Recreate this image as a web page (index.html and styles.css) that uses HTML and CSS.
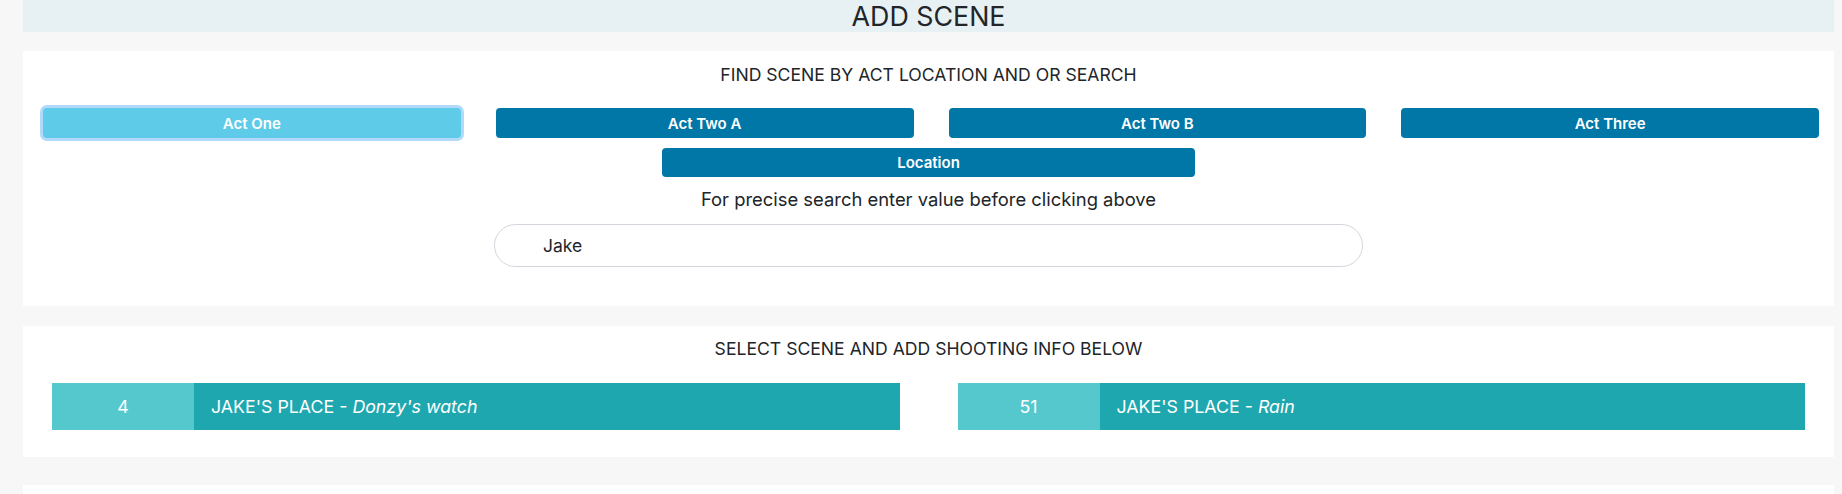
FILE: index.html
```html
<!DOCTYPE html>
<html lang="en">
<head>
<meta charset="utf-8">
<title>Add Scene</title>
<link rel="stylesheet" href="styles.css">
</head>
<body>
<div class="page">
  <div class="header"><h1 class="header-title">ADD SCENE</h1></div>

  <section class="card card-find">
    <h2 class="card-title">FIND SCENE BY ACT LOCATION AND OR SEARCH</h2>
    <div class="act-grid">
      <div class="act-cell"><button class="btn btn-active">Act One</button></div>
      <div class="act-cell"><button class="btn">Act Two A</button></div>
      <div class="act-cell"><button class="btn">Act Two B</button></div>
      <div class="act-cell"><button class="btn">Act Three</button></div>
    </div>
    <div class="location-row"><button class="btn btn-location">Location</button></div>
    <p class="hint">For precise search enter value before clicking above</p>
    <div class="search-row"><input class="search" type="text" value="Jake"></div>
  </section>

  <section class="card card-select">
    <h2 class="card-title">SELECT SCENE AND ADD SHOOTING INFO BELOW</h2>
    <div class="scene-grid">
      <div class="scene-col">
        <div class="scene">
          <div class="scene-num">4</div>
          <div class="scene-name">JAKE'S PLACE - <em>Donzy's watch</em></div>
        </div>
      </div>
      <div class="scene-col">
        <div class="scene">
          <div class="scene-num">51</div>
          <div class="scene-name">JAKE'S PLACE - <em>Rain</em></div>
        </div>
      </div>
    </div>
  </section>

  <section class="card card-next"></section>
</div>
</body>
</html>
```

FILE: styles.css
```css
html, body {
  margin: 0;
  padding: 0;
}
body {
  background: #f7f7f7;
  font-family: Inter, "Liberation Sans", Arial, sans-serif;
  color: #212529;
  overflow: hidden;
}
.page {
  padding: 0 8px 0 23px;
}
.header {
  height: 32px;
  background: #e7f0f2;
  display: flex;
  justify-content: center;
  align-items: center;
}
.header-title {
  margin: 0;
  font-weight: 400;
  font-size: 26.8px;
  line-height: 30px;
  color: #212529;
}
.card {
  background: #ffffff;
}
.card-find {
  margin-top: 19px;
  padding: 12px 0 38px;
  height: 205px;
}
.card-title {
  margin: 0;
  text-align: center;
  font-weight: 400;
  font-size: 17.6px;
  line-height: 24px;
  color: #212529;
}
.act-grid {
  display: grid;
  grid-template-columns: repeat(4, 1fr);
  margin-top: 21px;
}
.act-cell {
  padding: 0 15px 0 20px;
}
.btn {
  display: block;
  width: 100%;
  height: 30px;
  border: 0;
  border-radius: 4px;
  background: #0077a7;
  color: #ffffff;
  font-family: inherit;
  font-size: 15px;
  font-weight: 600;
  padding: 0;
}
.btn-active {
  background: #5ecbe8;
  box-shadow: 0 0 0 3px #b2d8fc;
}
.location-row {
  display: flex;
  justify-content: center;
  margin-top: 10px;
}
.btn-location {
  width: 533px;
  height: 29px;
}
.hint {
  margin: 9px 0 0;
  text-align: center;
  font-size: 18.4px;
  line-height: 27px;
  color: #212529;
}
.search-row {
  display: flex;
  justify-content: center;
  margin-top: 11px;
}
.search {
  box-sizing: border-box;
  width: 869px;
  height: 43px;
  border: 1px solid #d2d6dc;
  border-radius: 22px;
  padding: 0 0 0 48px;
  font-family: inherit;
  font-size: 17.5px;
  color: #212529;
  background: #ffffff;
  outline: none;
}
.card-select {
  margin-top: 20px;
  padding: 11px 0 28px;
  height: 92px;
}
.scene-grid {
  display: grid;
  grid-template-columns: 1fr 1fr;
  margin-top: 22px;
}
.scene-col {
  padding: 0 29px;
}
.scene {
  display: flex;
  height: 47px;
  color: #ffffff;
  font-size: 17.8px;
}
.scene-num {
  width: 142px;
  flex: none;
  background: #55c8ce;
  display: flex;
  align-items: center;
  justify-content: center;
}
.scene-name {
  flex: 1;
  background: #1fa7b0;
  display: flex;
  align-items: center;
  padding-left: 17px;
  white-space: pre;
}
.scene-name em {
  font-style: italic;
}
.card-next {
  margin-top: 28px;
  height: 40px;
}
```
